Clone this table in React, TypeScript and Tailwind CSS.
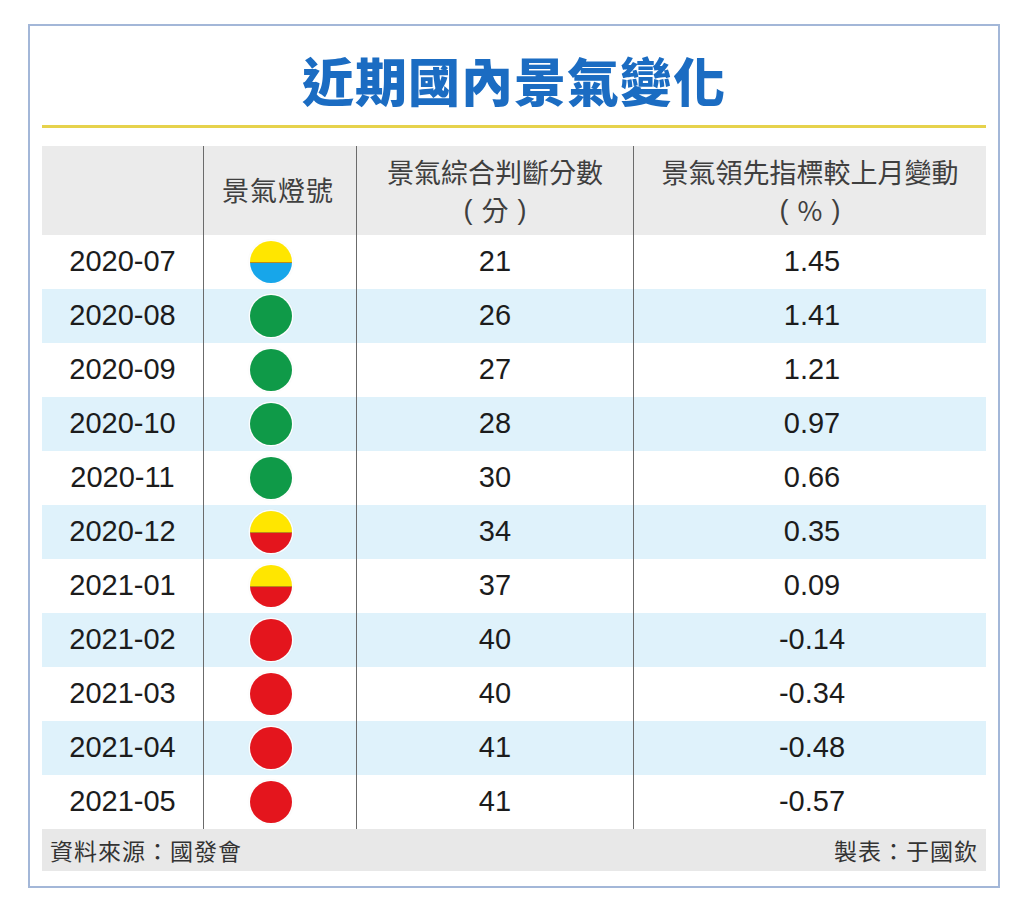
const rows: { month: string; light: [string, string]; score: string; change: string }[] = [
  { month: "2020-07", light: ["#ffe600", "#17a6ea"], score: "21", change: "1.45" },
  { month: "2020-08", light: ["#0f9a48", "#0f9a48"], score: "26", change: "1.41" },
  { month: "2020-09", light: ["#0f9a48", "#0f9a48"], score: "27", change: "1.21" },
  { month: "2020-10", light: ["#0f9a48", "#0f9a48"], score: "28", change: "0.97" },
  { month: "2020-11", light: ["#0f9a48", "#0f9a48"], score: "30", change: "0.66" },
  { month: "2020-12", light: ["#ffe600", "#e4151d"], score: "34", change: "0.35" },
  { month: "2021-01", light: ["#ffe600", "#e4151d"], score: "37", change: "0.09" },
  { month: "2021-02", light: ["#e4151d", "#e4151d"], score: "40", change: "-0.14" },
  { month: "2021-03", light: ["#e4151d", "#e4151d"], score: "40", change: "-0.34" },
  { month: "2021-04", light: ["#e4151d", "#e4151d"], score: "41", change: "-0.48" },
  { month: "2021-05", light: ["#e4151d", "#e4151d"], score: "41", change: "-0.57" }
];

const cjk = "font-['Noto_Sans_CJK_TC','Noto_Sans_CJK_SC',sans-serif]";
const num = "font-['Liberation_Sans',Arial,sans-serif]";

function Light({ colors }: { colors: [string, string] }) {
  const split = colors[0] !== colors[1];
  return (
    <div className="flex size-[42px] flex-col overflow-hidden rounded-full shadow-[0_0_0_1.5px_rgba(255,255,255,0.9),0_0_2px_1px_rgba(0,0,0,0.08)]">
      <div className="flex-1" style={{ backgroundColor: colors[0] }} />
      {split ? <div className="h-px bg-[#b98a1a]" /> : null}
      <div className="flex-1" style={{ backgroundColor: colors[1] }} />
    </div>
  );
}

function Unit({ children }: { children: string }) {
  return (
    <span className="flex items-center gap-[9px]">
      <span className={`${num} font-light`}>(</span>
      <span>{children}</span>
      <span className={`${num} font-light`}>)</span>
    </span>
  );
}

export default function App() {
  return (
    <div className="h-[913px] w-[1024px] bg-white pl-[28px] pt-[24px]">
      <div className="flex h-[864px] w-[972px] flex-col border-2 border-[#a3b7d8] px-[12px]">
        <h1
          className={`${cjk} mt-[22px] text-center text-[52px] font-black leading-[64px] tracking-[1px] text-[#1b6cc2]`}
        >
          近期國內景氣變化
        </h1>
        <div className="mt-[13px] h-[3px] bg-[#e6d24c]" />

        <div className="mt-[18px] grid grid-cols-[162px_153px_277px_352px]">
          <div className="h-[89px] border-r border-[#6b6b6b] bg-[#ebebeb]" />
          <div
            className={`${cjk} flex h-[89px] items-center justify-center border-r border-[#6b6b6b] bg-[#ebebeb] pr-[4px] text-[27px] tracking-[1px] text-[#3f3f3f]`}
          >
            景氣燈號
          </div>
          <div
            className={`${cjk} flex h-[89px] flex-col items-center justify-center border-r border-[#6b6b6b] bg-[#ebebeb] text-[27px] leading-[38px] text-[#3f3f3f]`}
          >
            <span>景氣綜合判斷分數</span>
            <Unit>分</Unit>
          </div>
          <div
            className={`${cjk} flex h-[89px] flex-col items-center justify-center bg-[#ebebeb] text-[27px] leading-[38px] text-[#3f3f3f]`}
          >
            <span>景氣領先指標較上月變動</span>
            <Unit>%</Unit>
          </div>

          {rows.map((row, i) => {
            const bg = i % 2 === 1 ? "bg-[#dff2fb]" : "bg-white";
            return (
              <div className="contents" key={row.month}>
                <div
                  className={`${num} ${bg} flex h-[54px] items-center justify-center border-r border-[#6b6b6b] text-[29px] text-[#1c1c1c]`}
                >
                  {row.month}
                </div>
                <div className={`${bg} flex h-[54px] items-center border-r border-[#6b6b6b] pl-[46px]`}>
                  <Light colors={row.light} />
                </div>
                <div
                  className={`${num} ${bg} flex h-[54px] items-center justify-center border-r border-[#6b6b6b] text-[29px] text-[#1c1c1c]`}
                >
                  {row.score}
                </div>
                <div
                  className={`${num} ${bg} flex h-[54px] items-center justify-center pl-[4px] text-[29px] text-[#1c1c1c]`}
                >
                  {row.change}
                </div>
              </div>
            );
          })}
        </div>

        <div
          className={`${cjk} flex h-[42px] items-center justify-between bg-[#e8e8e8] px-[8px] text-[23px] tracking-[1px] text-[#333]`}
        >
          <span>資料來源：國發會</span>
          <span>製表：于國欽</span>
        </div>
      </div>
    </div>
  );
}
